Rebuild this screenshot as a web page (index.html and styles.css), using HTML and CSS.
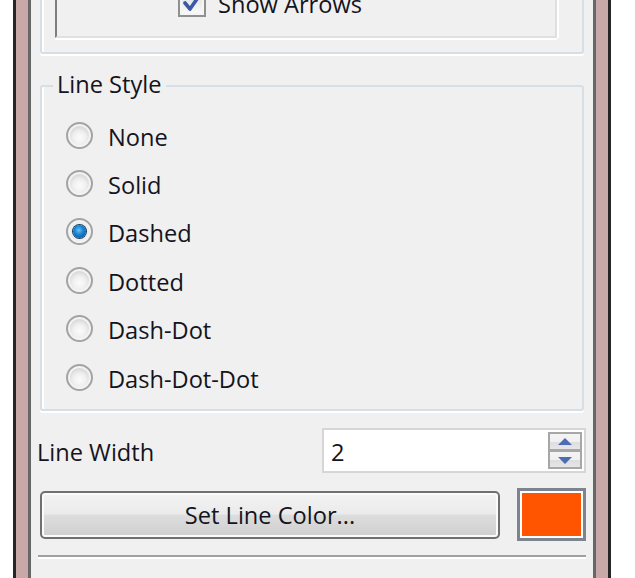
FILE: index.html
```
<!DOCTYPE html>
<html>
<head>
<meta charset="utf-8">
<link rel="stylesheet" href="styles.css">
</head>
<body>
<div class="page">
  <div class="frame">
    <div class="client">
      <div class="topgroup">
        <div class="sunken">
          <label class="checkrow">
            <span class="checkbox">
              <svg width="20" height="20" viewBox="0 0 20 20"><path d="M3 10 L8 16 L17 3" fill="none" stroke="#3d57a8" stroke-width="3.6" stroke-linejoin="round" stroke-linecap="round"/></svg>
            </span>
            <span class="label">Show Arrows</span>
          </label>
        </div>
      </div>

      <div class="group">
        <span class="group-title">Line Style</span>
        <div class="radio-row"><span class="radio"></span><span class="label">None</span></div>
        <div class="radio-row"><span class="radio"></span><span class="label">Solid</span></div>
        <div class="radio-row"><span class="radio checked"></span><span class="label">Dashed</span></div>
        <div class="radio-row"><span class="radio"></span><span class="label">Dotted</span></div>
        <div class="radio-row"><span class="radio"></span><span class="label">Dash-Dot</span></div>
        <div class="radio-row"><span class="radio"></span><span class="label">Dash-Dot-Dot</span></div>
      </div>

      <div class="width-row">
        <span class="label">Line Width</span>
        <div class="spinbox">
          <span class="spin-value">2</span>
          <div class="spin-buttons">
            <span class="spin-btn"><svg width="14" height="8" viewBox="0 0 14 8"><path d="M7 0 L14 7 L0 7 Z" fill="#4d6cb4"/></svg></span>
            <span class="spin-btn"><svg width="14" height="8" viewBox="0 0 14 8"><path d="M0 1 L14 1 L7 8 Z" fill="#4d6cb4"/></svg></span>
          </div>
        </div>
      </div>

      <div class="color-row">
        <button class="btn">Set Line Color...</button>
        <span class="swatch"><span class="swatch-fill"></span></span>
      </div>

      <div class="separator"></div>
    </div>
  </div>
</div>
</body>
</html>
```
FILE: styles.css
```
* { box-sizing: border-box; }
html, body { margin: 0; padding: 0; background: #fff; }
body {
  font-family: "Open Sans", "Noto Sans", sans-serif;
  font-size: 23.6px;
  color: #141420;
  overflow: hidden;
}
.page {
  width: 635px;
  height: 578px;
  padding-left: 13px;
  overflow: hidden;
}
.frame {
  width: 598px;
  height: 578px;
  background: #c9a8a8;
  border-left: 3px solid #262626;
  border-right: 3px solid #262626;
  padding: 0 12px;
}
.client {
  height: 578px;
  background: #f0f0f0;
  border-left: 3px solid #676767;
  border-right: 3px solid #676767;
  padding: 0 7px;
  display: flex;
  flex-direction: column;
  overflow: hidden;
}
.label { line-height: 30px; white-space: nowrap; padding-top: 3px; }

.topgroup {
  margin: -41px 2px 0 2px;
  height: 95px;
  border: 2px solid #d5dfe5;
  border-radius: 3px;
  box-shadow: 0 2px 0 #fff, inset 2px 0 0 #fff;
  flex: none;
}
.sunken {
  margin: 0 25px 0 13px;
  height: 77px;
  border-left: 2px solid #7e7e7e;
  border-top: 2px solid #7e7e7e;
  border-right: 2px solid #e0e0e0;
  border-bottom: 2px solid #e0e0e0;
  box-shadow: 0 2px 0 #fff, 2px 0 0 #fff;
  display: flex;
  flex-direction: column;
  justify-content: flex-end;
  padding: 0 0 17px 121px;
}
.checkrow { display: flex; align-items: center; gap: 12px; }
.checkbox {
  width: 28px; height: 28px;
  border: 2px solid #8e8f8f;
  background: linear-gradient(#dcdcdc, #fbfbfb);
  box-shadow: inset 0 0 0 2px #f4f4f4;
  display: flex; align-items: center; justify-content: center;
}

.group {
  position: relative;
  margin: 31px 2px 0 2px;
  height: 326px;
  border: 2px solid #d5dfe5;
  border-radius: 3px;
  box-shadow: 0 2px 0 #fff, inset 2px 0 0 #fff;
  padding: 24px 0 0 24px;
  flex: none;
}
.group-title {
  position: absolute;
  left: 11px;
  top: -20px;
  padding: 2px 4px 0;
  background: #f0f0f0;
  line-height: 30px;
}
.radio-row {
  height: 48.4px;
  display: flex;
  align-items: center;
  gap: 15px;
}
.radio {
  width: 27px; height: 27px;
  border-radius: 50%;
  border: 2px solid #a4a4a4;
  background: radial-gradient(circle at 50% 60%, #fbfbfb 0, #f0f0f0 35%, #d2d2d2 70%, #e8e8e8 100%);
  box-shadow: inset 0 0 0 2px #f3f3f3;
  display: flex; align-items: center; justify-content: center;
  flex: none;
}
.radio.checked {
  background: radial-gradient(circle, #f4f4f4 0, #e6e6e6 100%);
}
.radio.checked::after {
  content: "";
  width: 13px; height: 13px;
  border-radius: 50%;
  background: radial-gradient(circle at 45% 40%, #5fc6f6 0, #1c84d2 40%, #0b3d7c 100%);
  box-shadow: 0 0 0 1px #173e63;
}

.width-row {
  margin-top: 17px;
  display: flex;
  align-items: center;
  margin-left: -1px;
  flex: none;
}
.spinbox {
  margin-left: auto;
  width: 264px;
  height: 45px;
  background: #fff;
  border: 2px solid #d6d6d6;
  display: flex;
  align-items: center;
  padding: 0 2px 0 7px;
}
.spin-value { flex: 1; line-height: 30px; padding-top: 3px; }
.spin-buttons {
  width: 34px;
  height: 37px;
  display: flex;
  flex-direction: column;
}
.spin-btn {
  flex: 1;
  border: 2px solid #a7a7a7;
  background: linear-gradient(#f4f4f4 0, #f0f0f0 55%, #dedede 56%, #e6e6e6 100%);
  display: flex; align-items: center; justify-content: center;
}
.spin-btn + .spin-btn { border-top: 1px solid #a7a7a7; }

.color-row {
  margin-top: 15px;
  display: flex;
  align-items: center;
  flex: none;
}
.btn {
  margin-left: 2px;
  width: 460px;
  height: 48px;
  font: inherit;
  color: inherit;
  border: 2px solid #707070;
  border-radius: 5px;
  background: linear-gradient(#f2f2f2 0, #ebebeb 48%, #dddddd 50%, #cfcfcf 100%);
  box-shadow: inset 0 0 0 2px #fbfbfb;
  padding: 1px 0 0 0;
  line-height: 30px;
}
.swatch {
  margin-left: auto;
  width: 69px;
  height: 53px;
  border: 3px solid #7c848f;
  background: #fff;
  padding: 2px;
  display: flex;
}
.swatch-fill { flex: 1; background: #ff5500; }

.separator {
  margin-top: 14px;
  height: 2px;
  background: #a0a0a0;
  box-shadow: 0 2px 0 #fff;
  flex: none;
}
```
